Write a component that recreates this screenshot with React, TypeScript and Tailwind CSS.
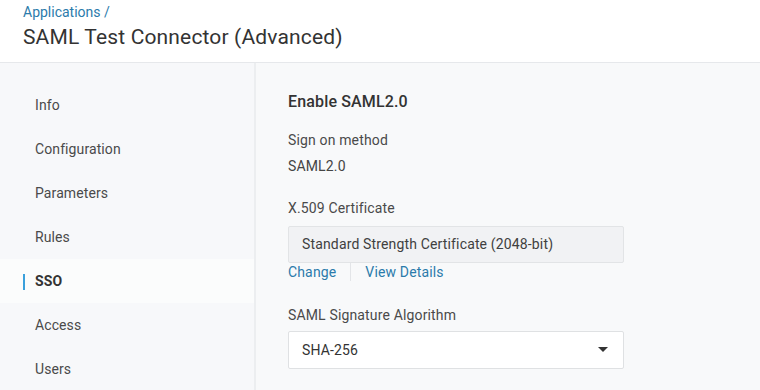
import React from 'react';

const navItems = ['Info', 'Configuration', 'Parameters', 'Rules', 'SSO', 'Access', 'Users'];

const App: React.FC = () => {
    const active = 'SSO';

    return (
        <div className="w-[760px] h-[390px] overflow-hidden bg-[#f8f9fa] text-[#404040]" style={{ fontFamily: 'Roboto, "Liberation Sans", sans-serif' }}>
            {/* Header */}
            <div className="h-[63px] bg-white border-b border-[#e6e8eb] px-[23px] pt-[3px]">
                <a className="block text-[14px] leading-[18px] text-[#2b7bab]">Applications /</a>
                <h1 className="text-[21px] leading-[30px] mt-[1px] tracking-[0.15px] text-[#333]">SAML Test Connector (Advanced)</h1>
            </div>

            <div className="flex h-[327px]">
                {/* Sidebar */}
                <div className="w-[256px] shrink-0 border-r-2 border-[#eceef0] bg-[#f7f8fa] pt-[20px]">
                    {navItems.map((item) => (
                        <div
                            key={item}
                            className={`h-[44px] flex items-center relative pl-[35px] text-[14px] tracking-[0.1px] ${
                                item === active ? 'bg-[#fbfcfc] font-bold text-[#333]' : 'text-[#4a4a4a]'
                            }`}
                        >
                            {item === active && (
                                <span className="absolute left-[23px] top-[15px] w-[2px] h-[16px] bg-[#3aa0dc]" />
                            )}
                            {item}
                        </div>
                    ))}
                </div>

                {/* Content */}
                <div className="flex-1 pl-[32px] pt-[28px] tracking-[0.15px]">
                    <h2 className="text-[16px] leading-[22px] font-medium text-[#333]">Enable SAML2.0</h2>

                    <div className="mt-[18px] text-[14px] leading-[18px] text-[#4a4a4a]">Sign on method</div>
                    <div className="mt-[8px] text-[14px] leading-[18px] text-[#444]">SAML2.0</div>

                    <div className="mt-[24px] text-[14px] leading-[18px] text-[#4a4a4a]">X.509 Certificate</div>
                    <div className="mt-[9px] w-[336px] h-[37px] flex items-center px-[13px] bg-[#f1f2f4] border border-[#e2e4e6] rounded-[2px] text-[14px] text-[#404040]">
                        Standard Strength Certificate (2048-bit)
                    </div>
                    <div className="flex items-center text-[14px] leading-[18px] text-[#2b7bab]">
                        <a>Change</a>
                        <span className="mx-[14px] w-px h-[18px] bg-[#e3e5e8]" />
                        <a>View Details</a>
                    </div>

                    <div className="mt-[25px] text-[14px] leading-[18px] text-[#4a4a4a]">SAML Signature Algorithm</div>
                    <div className="mt-[7px] w-[336px] h-[38px] flex items-center justify-between px-[13px] bg-white border border-[#dfe1e3] rounded-[2px] text-[14px] text-[#333]">
                        <span>SHA-256</span>
                        <svg width="10" height="6" viewBox="0 0 10 6" className="mr-[2px]">
                            <path d="M0 0 L10 0 L5 5 Z" fill="#333" />
                        </svg>
                    </div>
                </div>
            </div>
        </div>
    );
};

export default App;
